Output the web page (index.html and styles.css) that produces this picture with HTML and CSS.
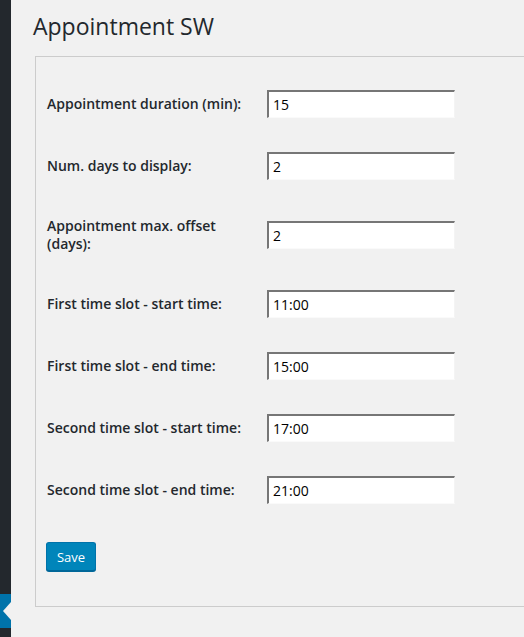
FILE: index.html
```html
<!DOCTYPE html>
<html>
<head>
<meta charset="utf-8">
<link rel="stylesheet" href="styles.css">
</head>
<body>
<div class="layout">
  <aside class="sidebar">
    <div class="active-tab"><span class="arrow"></span></div>
  </aside>
  <main class="content">
    <h1 class="title">Appointment SW</h1>
    <div class="panel">
      <div class="row"><label class="label">Appointment duration (min):</label><input class="field" type="text" value="15"></div>
      <div class="row"><label class="label">Num. days to display:</label><input class="field" type="text" value="2"></div>
      <div class="row"><label class="label">Appointment max. offset (days):</label><input class="field" type="text" value="2"></div>
      <div class="row"><label class="label">First time slot - start time:</label><input class="field" type="text" value="11:00"></div>
      <div class="row"><label class="label">First time slot - end time:</label><input class="field" type="text" value="15:00"></div>
      <div class="row"><label class="label">Second time slot - start time:</label><input class="field" type="text" value="17:00"></div>
      <div class="row"><label class="label">Second time slot - end time:</label><input class="field" type="text" value="21:00"></div>
      <button class="save" type="button">Save</button>
    </div>
  </main>
</div>
</body>
</html>
```
FILE: styles.css
```css
html, body {
  margin: 0;
  padding: 0;
  background: #f1f1f1;
  height: 100%;
  overflow: hidden;
}
body {
  font-family: "Open Sans", "Liberation Sans", sans-serif;
  color: #23282d;
}
.layout {
  display: flex;
  height: 637px;
}
.sidebar {
  width: 11px;
  flex: none;
  background: #23282d;
  position: relative;
}
.active-tab {
  position: absolute;
  left: 0;
  top: 594px;
  width: 11px;
  height: 34px;
  background: #0073aa;
}
.arrow {
  position: absolute;
  right: 0;
  top: 8px;
  width: 0;
  height: 0;
  border-top: 9px solid transparent;
  border-bottom: 9px solid transparent;
  border-right: 8px solid #f1f1f1;
}
.content {
  flex: 1;
  min-width: 0;
  padding-left: 22px;
}
.title {
  margin: 0;
  padding-top: 12px;
  font-size: 23px;
  font-weight: 400;
  line-height: 29px;
  height: 44px;
}
.panel {
  border: 1px solid #ccc;
  border-right: none;
  margin-left: 2px;
  padding: 16px 0 35px 11px;
}
.row {
  display: flex;
  align-items: center;
}
.label {
  width: 220px;
  flex: none;
  font-size: 14px;
  font-weight: 600;
  line-height: 18.2px;
  padding: 20px 10px 20px 0;
  box-sizing: border-box;
}
.field {
  width: 188px;
  height: 28px;
  box-sizing: border-box;
  background: #fff;
  border-top: 2px solid #767676;
  border-left: 2px solid #767676;
  border-right: 1px solid #f4f4f4;
  border-bottom: 1px solid #fafafa;
  padding: 0 4px;
  font-family: "Open Sans", "Liberation Sans", sans-serif;
  font-size: 14px;
  color: #000;
  margin: 17px 0;
  outline: none;
}
.save {
  margin: 21px 0 0 -1px;
  height: 29px;
  width: 50px;
  padding: 0;
  background: #0085ba;
  border: 1px solid #0073aa;
  border-bottom-color: #006799;
  border-radius: 3px;
  box-shadow: 0 1px 0 #006799;
  color: #fff;
  font-family: "Open Sans", "Liberation Sans", sans-serif;
  font-size: 13px;
  line-height: 26px;
  display: block;
}
```
